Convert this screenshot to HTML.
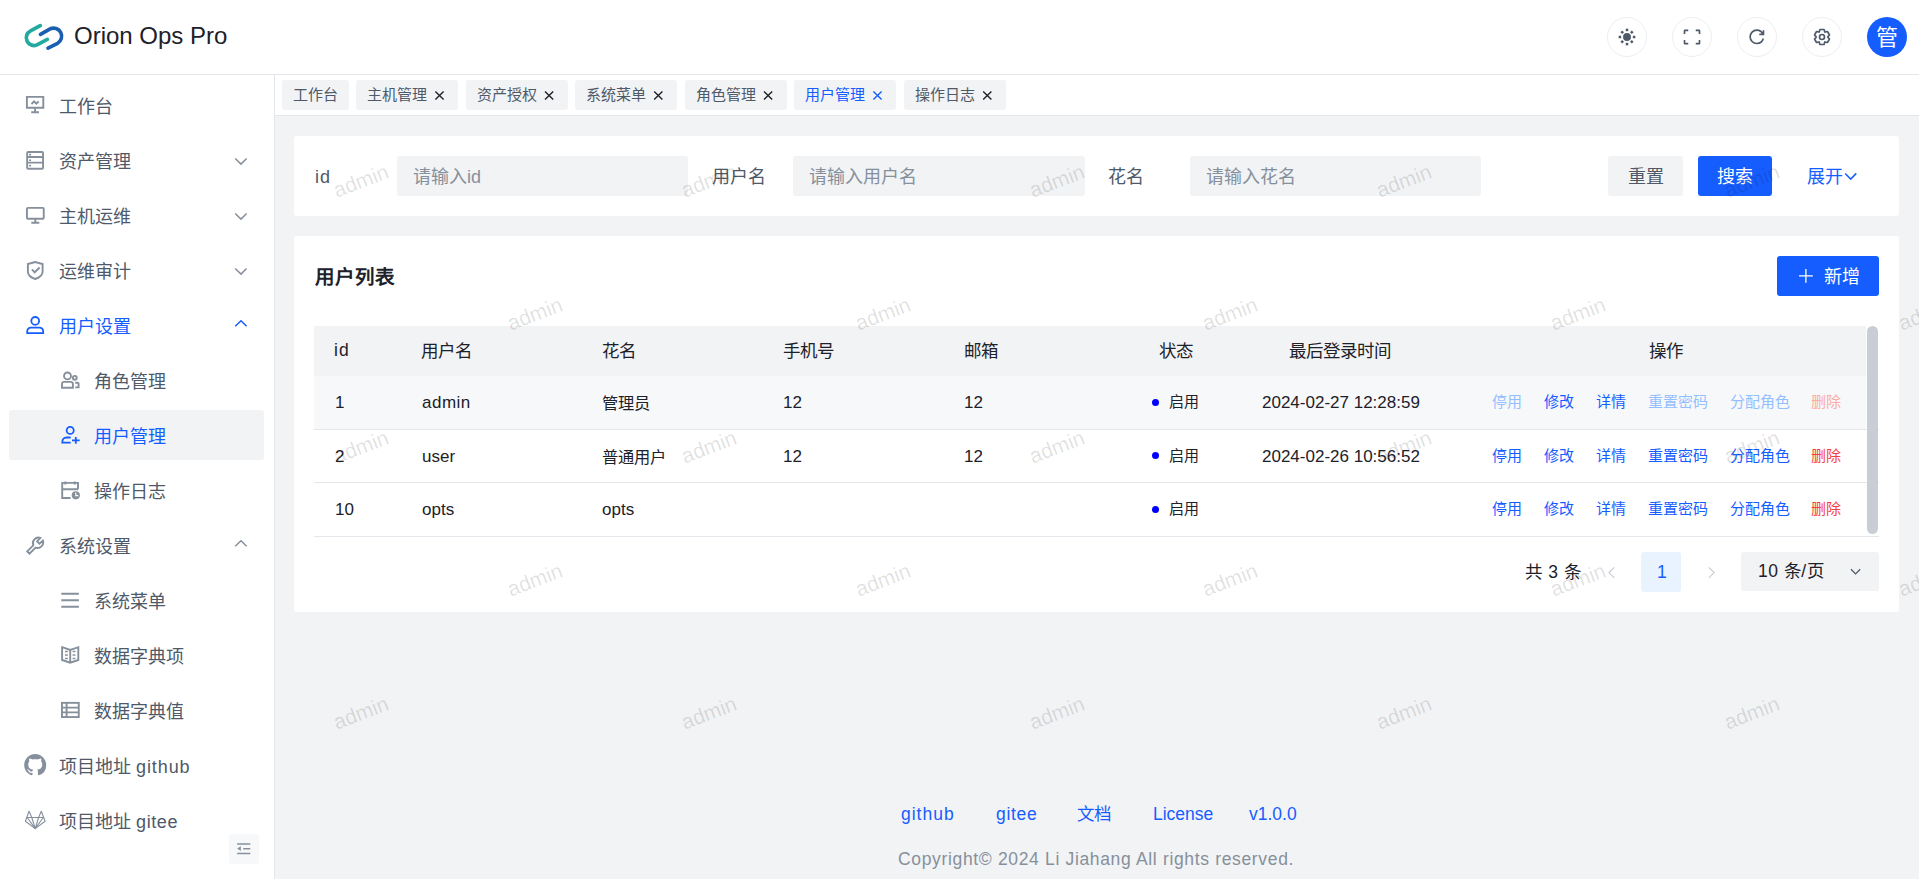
<!DOCTYPE html>
<html lang="zh-CN">
<head>
<meta charset="utf-8">
<title>Orion Ops Pro</title>
<style>
*{box-sizing:border-box;margin:0;padding:0}
html,body{width:1919px;height:879px;overflow:hidden}
body{position:relative;background:#f2f3f5;font-family:"Liberation Sans",sans-serif;color:#1d2129;font-size:17.5px;line-height:1}
.abs{position:absolute;white-space:nowrap}
svg{display:block}
#hd{position:absolute;left:0;top:0;width:1919px;height:75px;background:#fff;border-bottom:1px solid #e5e6eb}
#brand{position:absolute;left:74px;top:24px;font-size:24px;color:#1d2129;white-space:nowrap}
.hbtn{position:absolute;top:17px;width:40px;height:40px;border:1px solid #edeef1;border-radius:50%}
#avatar{position:absolute;left:1867px;top:17px;width:40px;height:40px;border-radius:50%;background:#165dff;color:#fff;font-size:22px;text-align:center;line-height:42px}
#sd{position:absolute;left:0;top:75px;width:275px;height:804px;background:#fff;border-right:1px solid #e5e6eb}
.mt{position:absolute;white-space:nowrap;color:#4e5969;font-size:18px}
.mt.on{color:#165dff}
#selbg{position:absolute;left:9px;top:335px;width:255px;height:50px;border-radius:3px;background:#f2f3f5}
#collapse{position:absolute;left:229px;top:759px;width:30px;height:30px;background:#f7f8fa;border-radius:3px}
#tabs{position:absolute;left:275px;top:75px;width:1644px;height:41px;background:#fff;border-bottom:1px solid #e5e6eb}
.tab{position:absolute;top:5px;height:30px;background:#f2f3f5;border-radius:3px;color:#4e5969;font-size:15px;white-space:nowrap}
.tab .t{position:absolute;left:11px;top:7px}
.tab.on{color:#165dff}
.card{position:absolute;background:#fff;border-radius:3px}
.lbl{position:absolute;color:#4e5969;font-size:18px;white-space:nowrap}
.inp{position:absolute;height:40px;background:#f2f3f5;border-radius:3px;color:#86909c;font-size:18px;white-space:nowrap}
.inp span{position:absolute;left:16px;top:12px}
.btn{position:absolute;height:40px;border-radius:3px;font-size:18px;white-space:nowrap}
.btn span{position:absolute;top:12px}
.th{position:absolute;color:#1d2129;font-size:17.5px;white-space:nowrap}
.td{position:absolute;white-space:nowrap;color:#1d2129;font-size:16.25px}
.la{font-size:17px}
.ac{position:absolute;font-size:15px;white-space:nowrap;color:#165dff}
.ac.d{color:#94bfff}
.ac.r{color:#f53f3f}
.ac.rd{color:#fbaca3}
.dot{position:absolute;width:7px;height:7px;border-radius:50%;background:#0000ff}
.wm{position:absolute;width:80px;height:24px;margin-left:-40px;margin-top:-12px;text-align:center;font-size:21px;line-height:24px;color:rgba(0,0,0,0.12);-webkit-font-smoothing:antialiased;transform:rotate(-21deg);white-space:nowrap}
.fl{position:absolute;color:#165dff;font-size:17.5px;white-space:nowrap}
#ov{position:absolute;left:0;top:0;width:1919px;height:879px;pointer-events:none}
</style>
</head>
<body>

<div id="hd">
  <div id="brand">Orion Ops Pro</div>
  <div class="hbtn" style="left:1607px"></div>
  <div class="hbtn" style="left:1672px"></div>
  <div class="hbtn" style="left:1737px"></div>
  <div class="hbtn" style="left:1802px"></div>
  <div id="avatar">管</div>
</div>

<div id="sd"></div>
<div id="selbg" style="top:410px"></div>
<span class="mt" style="left:59px;top:98px">工作台</span>
<span class="mt" style="left:59px;top:153px">资产管理</span>
<span class="mt" style="left:59px;top:208px">主机运维</span>
<span class="mt" style="left:59px;top:263px">运维审计</span>
<span class="mt on" style="left:59px;top:318px">用户设置</span>
<span class="mt" style="left:94px;top:373px">角色管理</span>
<span class="mt on" style="left:94px;top:428px">用户管理</span>
<span class="mt" style="left:94px;top:483px">操作日志</span>
<span class="mt" style="left:59px;top:538px">系统设置</span>
<span class="mt" style="left:94px;top:593px">系统菜单</span>
<span class="mt" style="left:94px;top:648px">数据字典项</span>
<span class="mt" style="left:94px;top:703px">数据字典值</span>
<span class="mt" style="left:59px;top:758px">项目地址 <span style="letter-spacing:0.9px">github</span></span>
<span class="mt" style="left:59px;top:813px">项目地址 <span style="letter-spacing:0.6px">gitee</span></span>
<div id="collapse" style="top:834px"></div>

<div id="tabs">
  <div class="tab" style="left:7px;width:67px"><span class="t">工作台</span></div>
  <div class="tab" style="left:81px;width:102px"><span class="t">主机管理</span></div>
  <div class="tab" style="left:191px;width:102px"><span class="t">资产授权</span></div>
  <div class="tab" style="left:300px;width:102px"><span class="t">系统菜单</span></div>
  <div class="tab" style="left:410px;width:102px"><span class="t">角色管理</span></div>
  <div class="tab on" style="left:519px;width:102px"><span class="t">用户管理</span></div>
  <div class="tab" style="left:629px;width:102px"><span class="t">操作日志</span></div>
</div>

<!-- search card -->
<div class="card" style="left:294px;top:136px;width:1605px;height:80px"></div>
<span class="lbl" style="left:315px;top:168px;letter-spacing:1px">id</span>
<div class="inp" style="left:397px;top:156px;width:291px"><span>请输入id</span></div>
<span class="lbl" style="left:712px;top:168px">用户名</span>
<div class="inp" style="left:793px;top:156px;width:292px"><span>请输入用户名</span></div>
<span class="lbl" style="left:1108px;top:168px">花名</span>
<div class="inp" style="left:1190px;top:156px;width:291px"><span>请输入花名</span></div>
<div class="btn" style="left:1608px;top:156px;width:75px;background:#f2f3f5;color:#4e5969"><span style="left:20px">重置</span></div>
<div class="btn" style="left:1698px;top:156px;width:74px;background:#165dff;color:#fff"><span style="left:19px">搜索</span></div>
<span class="lbl" style="left:1807px;top:168px;color:#165dff">展开</span>

<!-- table card -->
<div class="card" style="left:294px;top:236px;width:1605px;height:376px"></div>
<span class="abs" style="left:315px;top:268px;font-size:19.5px;font-weight:bold;color:#1d2129">用户列表</span>
<div class="btn" style="left:1777px;top:256px;width:102px;background:#165dff;color:#fff"><span style="left:47px">新增</span></div>

<div class="abs" style="left:314px;top:326px;width:1552px;height:50px;background:#f2f3f5"></div>
<div class="abs" style="left:314px;top:376px;width:1552px;height:53px;background:#f7f8fa"></div>
<div class="abs" style="left:314px;top:429px;width:1565px;height:1px;background:#e5e6eb"></div>
<div class="abs" style="left:314px;top:482px;width:1565px;height:1px;background:#e5e6eb"></div>
<div class="abs" style="left:314px;top:536px;width:1565px;height:1px;background:#e5e6eb"></div>
<div class="abs" style="left:1867px;top:326px;width:11px;height:208px;border-radius:6px;background:#c9cdd4"></div>

<span class="th" style="left:334px;top:342px;letter-spacing:1px">id</span>
<span class="th" style="left:421px;top:343px">用户名</span>
<span class="th" style="left:602px;top:343px">花名</span>
<span class="th" style="left:783px;top:343px">手机号</span>
<span class="th" style="left:964px;top:343px">邮箱</span>
<span class="th" style="left:1159px;top:343px">状态</span>
<span class="th" style="left:1289px;top:343px">最后登录时间</span>
<span class="th" style="left:1649px;top:343px">操作</span>

<!-- row 1 -->
<span class="td la" style="left:335px;top:394px">1</span>
<span class="td la" style="left:422px;top:394px;letter-spacing:0.5px">admin</span>
<span class="td" style="left:602px;top:395px">管理员</span>
<span class="td la" style="left:783px;top:394px">12</span>
<span class="td la" style="left:964px;top:394px">12</span>
<div class="dot" style="left:1152px;top:399px"></div>
<span class="ac" style="left:1169px;top:394px;color:#1d2129">启用</span>
<span class="td la" style="left:1262px;top:394px">2024-02-27 12:28:59</span>
<span class="ac d" style="left:1492px;top:394px">停用</span>
<span class="ac" style="left:1544px;top:394px">修改</span>
<span class="ac" style="left:1596px;top:394px">详情</span>
<span class="ac d" style="left:1648px;top:394px">重置密码</span>
<span class="ac d" style="left:1730px;top:394px">分配角色</span>
<span class="ac rd" style="left:1811px;top:394px">删除</span>

<!-- row 2 -->
<span class="td la" style="left:335px;top:448px">2</span>
<span class="td la" style="left:422px;top:448px">user</span>
<span class="td" style="left:602px;top:449px">普通用户</span>
<span class="td la" style="left:783px;top:448px">12</span>
<span class="td la" style="left:964px;top:448px">12</span>
<div class="dot" style="left:1152px;top:452px"></div>
<span class="ac" style="left:1169px;top:448px;color:#1d2129">启用</span>
<span class="td la" style="left:1262px;top:448px">2024-02-26 10:56:52</span>
<span class="ac" style="left:1492px;top:448px">停用</span>
<span class="ac" style="left:1544px;top:448px">修改</span>
<span class="ac" style="left:1596px;top:448px">详情</span>
<span class="ac" style="left:1648px;top:448px">重置密码</span>
<span class="ac" style="left:1730px;top:448px">分配角色</span>
<span class="ac r" style="left:1811px;top:448px">删除</span>

<!-- row 3 -->
<span class="td la" style="left:335px;top:501px">10</span>
<span class="td la" style="left:422px;top:501px">opts</span>
<span class="td la" style="left:602px;top:501px">opts</span>
<div class="dot" style="left:1152px;top:506px"></div>
<span class="ac" style="left:1169px;top:501px;color:#1d2129">启用</span>
<span class="ac" style="left:1492px;top:501px">停用</span>
<span class="ac" style="left:1544px;top:501px">修改</span>
<span class="ac" style="left:1596px;top:501px">详情</span>
<span class="ac" style="left:1648px;top:501px">重置密码</span>
<span class="ac" style="left:1730px;top:501px">分配角色</span>
<span class="ac r" style="left:1811px;top:501px">删除</span>

<!-- pagination -->
<span class="abs" style="left:1525px;top:564px;font-size:17.5px;color:#1d2129;word-spacing:1.5px">共 3 条</span>
<div class="abs" style="left:1641px;top:552px;width:40px;height:40px;border-radius:3px;background:#e8f3ff"></div>
<span class="abs" style="left:1657px;top:564px;font-size:17.5px;color:#165dff">1</span>
<div class="abs" style="left:1741px;top:552px;width:138px;height:39px;border-radius:3px;background:#f2f3f5"></div>
<span class="abs" style="left:1758px;top:563px;font-size:17.5px;color:#1d2129;letter-spacing:0.5px">10 条/页</span>

<!-- watermark -->
<div class="abs" style="left:275px;top:116px;width:1644px;height:674px;overflow:hidden;pointer-events:none">
<div class="wm" style="left:86.3px;top:65.0px">admin</div>
<div class="wm" style="left:433.9px;top:65.0px">admin</div>
<div class="wm" style="left:781.5px;top:65.0px">admin</div>
<div class="wm" style="left:1129.1px;top:65.0px">admin</div>
<div class="wm" style="left:1476.7px;top:65.0px">admin</div>
<div class="wm" style="left:260.1px;top:197.9px">admin</div>
<div class="wm" style="left:607.7px;top:197.9px">admin</div>
<div class="wm" style="left:955.3px;top:197.9px">admin</div>
<div class="wm" style="left:1302.9px;top:197.9px">admin</div>
<div class="wm" style="left:1650.5px;top:197.9px">admin</div>
<div class="wm" style="left:86.3px;top:330.8px">admin</div>
<div class="wm" style="left:433.9px;top:330.8px">admin</div>
<div class="wm" style="left:781.5px;top:330.8px">admin</div>
<div class="wm" style="left:1129.1px;top:330.8px">admin</div>
<div class="wm" style="left:1476.7px;top:330.8px">admin</div>
<div class="wm" style="left:260.1px;top:463.7px">admin</div>
<div class="wm" style="left:607.7px;top:463.7px">admin</div>
<div class="wm" style="left:955.3px;top:463.7px">admin</div>
<div class="wm" style="left:1302.9px;top:463.7px">admin</div>
<div class="wm" style="left:1650.5px;top:463.7px">admin</div>
<div class="wm" style="left:86.3px;top:596.6px">admin</div>
<div class="wm" style="left:433.9px;top:596.6px">admin</div>
<div class="wm" style="left:781.5px;top:596.6px">admin</div>
<div class="wm" style="left:1129.1px;top:596.6px">admin</div>
<div class="wm" style="left:1476.7px;top:596.6px">admin</div>
</div>

<!-- footer -->
<span class="fl" style="left:901px;top:806px;letter-spacing:1px">github</span>
<span class="fl" style="left:996px;top:806px;letter-spacing:0.7px">gitee</span>
<span class="fl" style="left:1077px;top:806px;letter-spacing:0">文档</span>
<span class="fl" style="left:1153px;top:806px;letter-spacing:0">License</span>
<span class="fl" style="left:1249px;top:806px;letter-spacing:0">v1.0.0</span>
<span class="abs" style="left:898px;top:851px;font-size:17.5px;color:#86909c;letter-spacing:0.66px">Copyright© 2024 Li Jiahang All rights reserved.</span>

<!-- icon overlay -->
<svg id="ov" width="1919" height="879" viewBox="0 0 1919 879" fill="none" stroke-linecap="butt">
 <!-- logo -->
 <path d="M40.25 25.6 L30.5 30.94 A7.7 7.7 0 0 0 37.5 44.66 L47.3 39.4" stroke="#22a9a0" stroke-width="3.7" stroke-linecap="round"/>
 <path d="M40.5 34.4 L50.1 28.9 A8.1 8.1 0 0 1 57.5 43.3 L48 48.1" stroke="#1a5fb0" stroke-width="3.7" stroke-linecap="round"/>
 <g stroke="#86909c" stroke-width="1.9">
  <!-- computer -->
  <path d="M26.9 96.9 H43.3 V107.8 H26.9 Z"/>
  <path d="M35.1 107.8 V112.2 M31.2 112.2 H39"/>
  <path d="M31.5 104.1 L34 101.4 L36.3 103.7 L38.7 101.3"/>
  <!-- storage -->
  <rect x="27.15" y="151.95" width="15.9" height="16.8" rx="1"/>
  <path d="M27.2 157 H43 M27.2 162.6 H43"/>
  <path d="M29.1 154.6 H31.1 M29.1 160.2 H31.1 M29.1 165.6 H31.1" stroke-width="1.6"/>
  <!-- desktop -->
  <rect x="26.95" y="207.85" width="16.8" height="10.9" rx="1"/>
  <path d="M35.3 218.8 V222.7 M31.3 222.7 H39.3"/>
  <!-- safe -->
  <path d="M35.2 262 L27.9 264 V271.5 C27.9 275.5 31.5 277.8 35.2 279 C38.9 277.8 42.6 275.5 42.6 271.5 V264 Z"/>
  <path d="M31.9 269.4 L34.7 272.3 L39.6 267.5"/>
  <!-- tool -->
  <path d="M40.3 537.9 A5.6 5.6 0 0 0 33.3 545.3 L27.2 551.4 L29.5 553.7 L35.6 547.6 A5.6 5.6 0 0 0 42.9 540.6 L39.5 543.8 L37.1 541.4 Z"/>
  <!-- menu -->
  <path d="M61.3 593.7 H78.9 M61.3 600.2 H78.9 M61.3 606.8 H78.9"/>
  <!-- book -->
  <path d="M62.1 647.2 L70.2 649.9 L78.3 647.2 V660 L70.2 662.7 L62.1 660 Z M70.2 649.9 V662.7"/>
  <path d="M65 651.6 H67.8 M65 655 H67.8 M65 658.4 H67.8 M72.6 651.6 H75.4 M72.6 655 H75.4 M72.6 658.4 H75.4" stroke-width="1.5"/>
  <!-- table -->
  <rect x="61.95" y="702.85" width="16.8" height="14.2"/>
  <path d="M62 707.6 H78.7 M62 712.4 H78.7 M66.6 702.9 V717"/>
  <!-- user-group -->
  <circle cx="67.5" cy="375.9" r="3.45"/>
  <circle cx="74.8" cy="377.8" r="1.95"/>
  <path d="M62 387.8 V384 A2.1 2.1 0 0 1 64.1 381.9 H70.8 A2.1 2.1 0 0 1 72.9 384 V387.8 Z"/>
  <path d="M75.2 382.7 H77.6 A1 1 0 0 1 78.6 383.7 V387.4 H75.2"/>
  <!-- calendar clock -->
  <path d="M70.6 498 H62.2 V482.9 H78 V489.3 M62.2 489.2 H78 M65.4 481.4 V484.6 M74.8 481.4 V484.6"/>
  <!-- gitlab -->
  <g stroke-width="1.1" stroke-linejoin="round">
   <path d="M35.2 828.6 L25.4 821.3 L29 811.3 L31.8 817.5 H38.6 L41.3 811.3 L45.1 821.3 Z"/>
   <path d="M26.9 817.5 H43.5 M27.2 817.5 L35.2 828.6 L43.3 817.5 M31.8 817.5 L35.2 828.6 L38.6 817.5"/>
  </g>
  <!-- collapse -->
  <path d="M237.1 844 H250.3 M243.2 848.7 H250.3 M237.1 853.5 H250.3" stroke-width="1.5"/>
 </g>
 <circle cx="75.8" cy="495.3" r="4.1" fill="#86909c"/>
 <path d="M75.8 492.6 V495.6 H78.3" stroke="#fff" stroke-width="1.1"/>
 <path d="M237.2 848.6 L240.8 846.3 V850.9 Z" fill="#86909c"/>
 <!-- github -->
 <path transform="translate(24.2 753.9) scale(1.375)" fill="#86909c" d="M8 0C3.58 0 0 3.58 0 8c0 3.54 2.29 6.53 5.47 7.59.4.07.55-.17.55-.38 0-.19-.01-.82-.01-1.49-2.01.37-2.53-.49-2.69-.94-.09-.23-.48-.94-.82-1.13-.28-.15-.68-.52-.01-.53.63-.01 1.08.58 1.23.82.72 1.21 1.870.87 2.33.66.07-.52.28-.87.51-1.07-1.78-.2-3.64-.89-3.64-3.95 0-.87.31-1.59.82-2.15-.08-.2-.36-1.02.08-2.12 0 0 .67-.21 2.2.82.64-.18 1.32-.27 2-.27.68 0 1.360.09 2 .27 1.53-1.04 2.2-.82 2.2-.82.44 1.1.16 1.92.08 2.12.51.56.82 1.27.82 2.15 0 3.07-1.87 3.75-3.65 3.95.29.25.54.73.54 1.48 0 1.07-.01 1.93-.01 2.2 0 .21.15.46.55.38A8.013 8.013 0 0016 8c0-4.42-3.58-8-8-8z"/>
 <!-- active (blue) icons -->
 <g stroke="#165dff" stroke-width="1.8">
  <circle cx="35.2" cy="320.9" r="3.9"/>
  <path d="M27.2 333.1 V331.3 A3.7 3.7 0 0 1 30.9 327.6 H39.5 A3.7 3.7 0 0 1 43.2 331.3 V333.1 Z"/>
  <circle cx="70.2" cy="430.4" r="3.55"/>
  <path d="M70.7 437.5 H66.6 A4.3 4.3 0 0 0 62.3 441.8 V442.7 H70.7"/>
  <path d="M75.8 437 V443.7 M72 440.3 H79.7"/>
 </g>
 <!-- sidebar chevrons -->
 <path d="M235.2 268.5 L241 274.1 L246.6 268.5 M235.2 213.5 L241 219.1 L246.6 213.5 M235.2 158.5 L241 164.1 L246.6 158.5" stroke="#86909c" stroke-width="1.5"/>
 <path d="M235.2 326.3 L241 320.7 L246.6 326.3" stroke="#165dff" stroke-width="1.5"/>
 <path d="M235.2 546.3 L241 540.7 L246.6 546.3" stroke="#86909c" stroke-width="1.5"/>
 <!-- header icons (arco 48 grid scaled 20px) -->
 <g transform="translate(1617 27) scale(0.41667)" fill="#4e5969">
  <circle cx="24" cy="24" r="9.5"/>
  <rect x="21" y="4" width="6" height="6"/><rect x="21" y="38" width="6" height="6"/>
  <rect x="4" y="21" width="6" height="6"/><rect x="38" y="21" width="6" height="6"/>
  <rect x="9.5" y="9.5" width="6" height="6" transform="rotate(45 12.5 12.5)"/><rect x="32.5" y="9.5" width="6" height="6" transform="rotate(45 35.5 12.5)"/>
  <rect x="9.5" y="32.5" width="6" height="6" transform="rotate(45 12.5 35.5)"/><rect x="32.5" y="32.5" width="6" height="6" transform="rotate(45 35.5 35.5)"/>
 </g>
 <g transform="translate(1682 27) scale(0.41667)" stroke="#4e5969" stroke-width="4">
  <path d="M42 17V9a1 1 0 0 0-1-1h-8M6 17V9a1 1 0 0 1 1-1h8m27 23v8a1 1 0 0 1-1 1h-8M6 31v8a1 1 0 0 0 1 1h8"/>
 </g>
 <g transform="translate(1746.8 26.8) scale(0.41667)" stroke="#4e5969" stroke-width="4">
  <path d="M38.837 18C36.463 12.136 30.715 8 24 8 15.163 8 8 15.163 8 24s7.163 16 16 16c7.455 0 13.72-5.1 15.496-12M40 8v10H30"/>
 </g>
 <g transform="translate(1812 27) scale(0.41667)" stroke="#4e5969" stroke-width="4">
  <path d="M18.797 6.732A1 1 0 0 1 19.76 6h8.48a1 1 0 0 1 .964.732l1.285 4.628a1 1 0 0 0 1.213.7l4.651-1.2a1 1 0 0 1 1.116.468l4.24 7.344a1 1 0 0 1-.153 1.2L38.193 23.3a1 1 0 0 0 0 1.402l3.364 3.427a1 1 0 0 1 .153 1.2l-4.24 7.344a1 1 0 0 1-1.116.468l-4.65-1.2a1 1 0 0 0-1.214.7l-1.285 4.628a1 1 0 0 1-.964.732h-8.48a1 1 0 0 1-.963-.732L17.51 36.64a1 1 0 0 0-1.213-.7l-4.65 1.2a1 1 0 0 1-1.116-.468l-4.24-7.344a1 1 0 0 1 .153-1.2L9.809 24.7a1 1 0 0 0 0-1.402l-3.364-3.427a1 1 0 0 1-.153-1.2l4.24-7.344a1 1 0 0 1 1.116-.468l4.65 1.2a1 1 0 0 0 1.214-.7l1.285-4.628Z"/>
  <path d="M30 24a6 6 0 1 1-12 0 6 6 0 0 1 12 0Z"/>
 </g>
 <!-- tab close icons -->
 <g stroke="#1d2129" stroke-width="1.4">
  <path d="M435.4 91.4 L443.6 99.6 M443.6 91.4 L435.4 99.6"/>
  <path d="M545 91.4 L553.2 99.6 M553.2 91.4 L545 99.6"/>
  <path d="M654.2 91.4 L662.4 99.6 M662.4 91.4 L654.2 99.6"/>
  <path d="M764 91.4 L772.2 99.6 M772.2 91.4 L764 99.6"/>
  <path d="M983.2 91.4 L991.4 99.6 M991.4 91.4 L983.2 99.6"/>
 </g>
 <path d="M873.4 91.4 L881.6 99.6 M881.6 91.4 L873.4 99.6" stroke="#165dff" stroke-width="1.4"/>
 <!-- expand chevron -->
 <path d="M1845.2 173.5 L1850.7 179.1 L1856.3 173.4" stroke="#165dff" stroke-width="1.5"/>
 <!-- plus -->
 <path d="M1799 275.8 H1812.8 M1805.9 268.9 V282.7" stroke="#fff" stroke-width="1.3"/>
 <!-- pagination arrows -->
 <path d="M1614.2 567.4 L1609 572.6 L1614.2 577.8" stroke="#c9cdd4" stroke-width="1.2"/>
 <path d="M1708.9 567.4 L1714.1 572.6 L1708.9 577.8" stroke="#c9cdd4" stroke-width="1.2"/>
 <path d="M1851 569.3 L1855.6 573.9 L1860.2 569.3" stroke="#4e5969" stroke-width="1.3"/>
</svg>

</body>
</html>
